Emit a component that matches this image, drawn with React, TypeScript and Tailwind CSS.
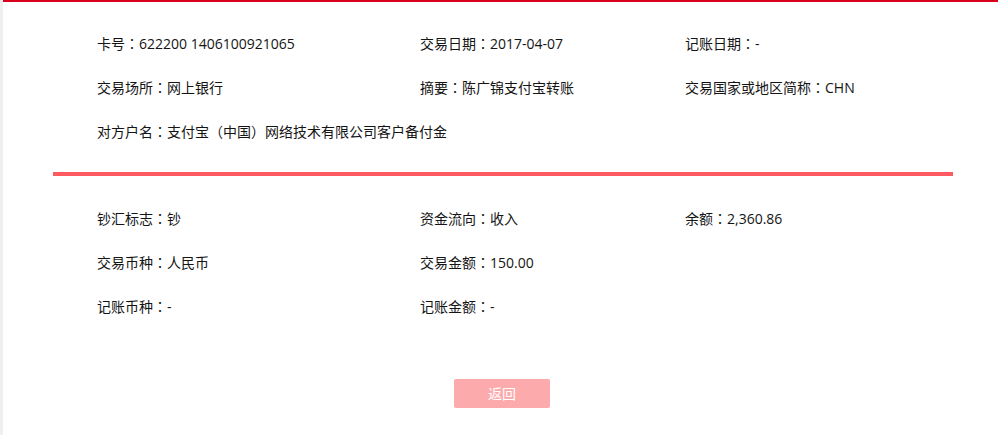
const topRows = [
  ['卡号：622200 1406100921065', '交易日期：2017-04-07', '记账日期：-'],
  ['交易场所：网上银行', '摘要：陈广锦支付宝转账', '交易国家或地区简称：CHN'],
  ['对方户名：支付宝（中国）网络技术有限公司客户备付金', '', ''],
];

const bottomRows = [
  ['钞汇标志：钞', '资金流向：收入', '余额：2,360.86'],
  ['交易币种：人民币', '交易金额：150.00', ''],
  ['记账币种：-', '记账金额：-', ''],
];

// full-width colon centred in its box, as the reference font draws it
const Field = ({ text }: { text: string }) => {
  if (!text) return <div />;
  const [label, ...rest] = text.split('：');
  return (
    <div className="whitespace-nowrap">
      {label}
      <span style={{ fontFamily: '"Noto Sans CJK TC", sans-serif' }}>：</span>
      {rest.join('：')}
    </div>
  );
};

const InfoGrid = ({ rows }: { rows: string[][] }) => (
  <div className="pl-[94px]">
    {rows.map((row, i) => (
      <div key={i} className="grid grid-cols-[323px_265px_1fr] h-[44px] items-center">
        {row.map((cell, j) => (
          <Field key={j} text={cell} />
        ))}
      </div>
    ))}
  </div>
);

const App = () => {
  return (
    <div
      className="flex min-h-[435px] w-[998px] bg-white text-[14px] text-[#141414]"
      style={{ fontFamily: '"Open Sans", "Noto Sans CJK SC", sans-serif' }}
    >
      <div className="w-[3px] shrink-0 bg-[#efefef]" />
      <main className="flex-1 border-t-2 border-[#d9001b] pt-[19px]">
        <InfoGrid rows={topRows} />

        <div className="ml-[50px] mt-[19px] mb-[20px] h-[4px] w-[900px] bg-[#ff5a5f]" />

        <InfoGrid rows={bottomRows} />

        <button
          type="button"
          className="ml-[451px] mt-[51px] h-[29px] w-[96px] rounded-[2px] bg-[#fdaaac] text-white"
          style={{ fontFamily: '"Noto Sans CJK SC", sans-serif' }}
        >
          返回
        </button>
      </main>
    </div>
  );
};

export default App;
